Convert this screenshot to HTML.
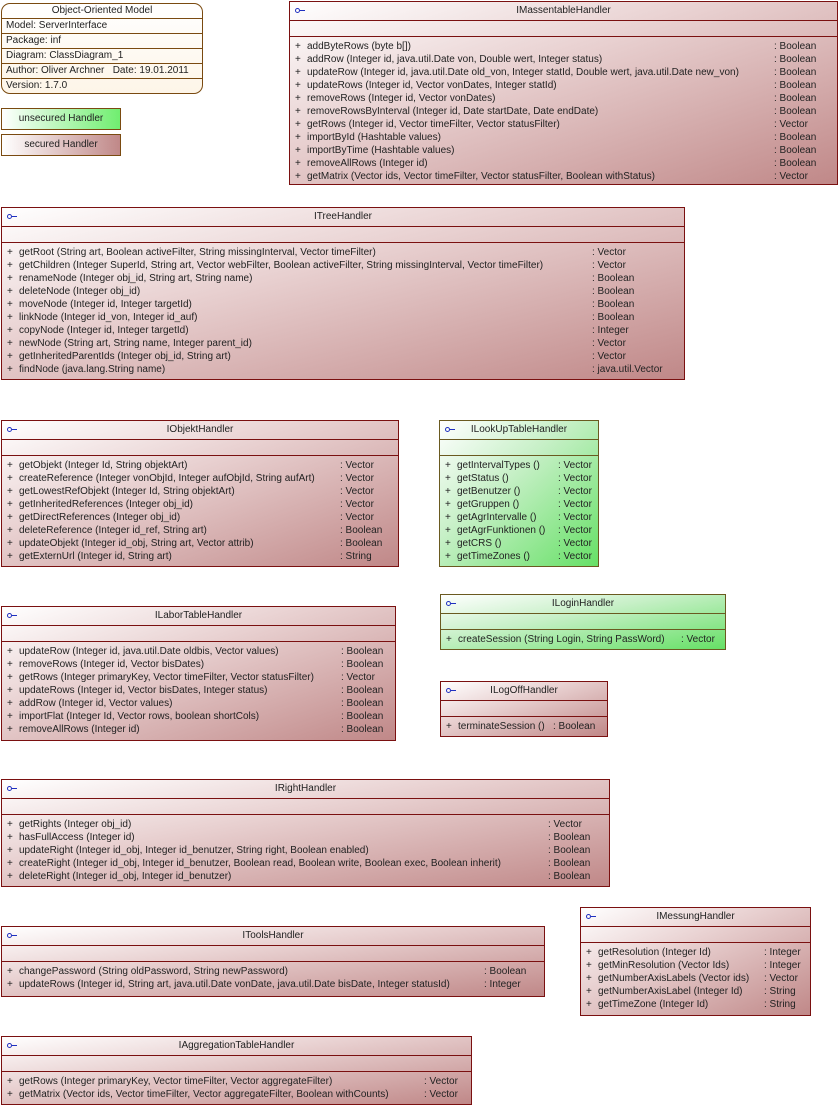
<!DOCTYPE html>
<html><head><meta charset="utf-8"><style>
*{margin:0;padding:0;box-sizing:border-box}
body{width:838px;height:1105px;background:#fff;position:relative;overflow:hidden;font-family:"Liberation Sans",sans-serif;font-size:10px;color:#222}
.b{position:absolute;border:1px solid #7a1010;background:linear-gradient(to bottom right,#fff 0%,#e8d0d0 40%,#c08888 100%)}
.g{border-color:#6a5a20;background:linear-gradient(to bottom right,#fff 0%,#c8f0c8 40%,#66e066 100%)}
.h{height:19px;border-bottom:1px solid #7a1010;text-align:center;line-height:18px;position:relative}
.g .h,.g .e{border-color:#6a5a20}
.h i{position:absolute;left:5px;top:6px;width:5px;height:5px;border:1px solid #2030c0;border-radius:50%}
.h i:after{content:"";position:absolute;left:4px;top:1px;width:5px;height:1px;background:#2030c0}
.e{height:16px;border-bottom:1px solid #7a1010}
.m{padding:3px 0 2px 0;position:relative}
.r{height:13px;line-height:13px;white-space:nowrap;position:relative}
.r b{font-weight:normal;position:absolute;left:5px}
.r s{text-decoration:none;position:absolute;left:17px}
.r u{text-decoration:none;position:absolute}
.info{position:absolute;left:1px;top:3px;width:202px;height:91px;border:1px solid #7a4a10;border-radius:9px;background:linear-gradient(#fff,#fdf5e8);overflow:hidden}
.info div{height:15px;line-height:14px;border-bottom:1px solid #7a4a10;padding-left:4px}
.info div:last-child{border:none}
.leg{position:absolute;left:1px;width:120px;height:22px;border:1px solid #7a4a10;text-align:center;line-height:20px}
</style></head><body>

<div class="info">
<div style="text-align:center;padding:0">Object-Oriented Model</div>
<div>Model: ServerInterface</div>
<div>Package: inf</div>
<div>Diagram: ClassDiagram_1</div>
<div>Author: Oliver Archner&nbsp;&nbsp; Date: 19.01.2011</div>
<div>Version: 1.7.0</div>
</div>
<div class="leg" style="top:108px;background:linear-gradient(to right,#fff,#70ee70)">unsecured Handler</div>
<div class="leg" style="top:134px;background:linear-gradient(to right,#fff,#c08888)">secured Handler</div>

<div class="b" style="left:289px;top:1px;width:549px;height:184px">
<div class="h"><i></i>IMassentableHandler</div><div class="e"></div>
<div class="m">
<div class="r"><b>+</b><s>addByteRows (byte b[])</s><u style="left:484px">: Boolean</u></div>
<div class="r"><b>+</b><s>addRow (Integer id, java.util.Date von, Double wert, Integer status)</s><u style="left:484px">: Boolean</u></div>
<div class="r"><b>+</b><s>updateRow (Integer id, java.util.Date old_von, Integer statId, Double wert, java.util.Date new_von)</s><u style="left:484px">: Boolean</u></div>
<div class="r"><b>+</b><s>updateRows (Integer id, Vector vonDates, Integer statId)</s><u style="left:484px">: Boolean</u></div>
<div class="r"><b>+</b><s>removeRows (Integer id, Vector vonDates)</s><u style="left:484px">: Boolean</u></div>
<div class="r"><b>+</b><s>removeRowsByInterval (Integer id, Date startDate, Date endDate)</s><u style="left:484px">: Boolean</u></div>
<div class="r"><b>+</b><s>getRows (Integer id, Vector timeFilter, Vector statusFilter)</s><u style="left:484px">: Vector</u></div>
<div class="r"><b>+</b><s>importById (Hashtable values)</s><u style="left:484px">: Boolean</u></div>
<div class="r"><b>+</b><s>importByTime (Hashtable values)</s><u style="left:484px">: Boolean</u></div>
<div class="r"><b>+</b><s>removeAllRows (Integer id)</s><u style="left:484px">: Boolean</u></div>
<div class="r"><b>+</b><s>getMatrix (Vector ids, Vector timeFilter, Vector statusFilter, Boolean withStatus)</s><u style="left:484px">: Vector</u></div>
</div></div>

<div class="b" style="left:1px;top:207px;width:684px;height:173px">
<div class="h"><i></i>ITreeHandler</div><div class="e"></div>
<div class="m">
<div class="r"><b>+</b><s>getRoot (String art, Boolean activeFilter, String missingInterval, Vector timeFilter)</s><u style="left:590px">: Vector</u></div>
<div class="r"><b>+</b><s>getChildren (Integer SuperId, String art, Vector webFilter, Boolean activeFilter, String missingInterval, Vector timeFilter)</s><u style="left:590px">: Vector</u></div>
<div class="r"><b>+</b><s>renameNode (Integer obj_id, String art, String name)</s><u style="left:590px">: Boolean</u></div>
<div class="r"><b>+</b><s>deleteNode (Integer obj_id)</s><u style="left:590px">: Boolean</u></div>
<div class="r"><b>+</b><s>moveNode (Integer id, Integer targetId)</s><u style="left:590px">: Boolean</u></div>
<div class="r"><b>+</b><s>linkNode (Integer id_von, Integer id_auf)</s><u style="left:590px">: Boolean</u></div>
<div class="r"><b>+</b><s>copyNode (Integer id, Integer targetId)</s><u style="left:590px">: Integer</u></div>
<div class="r"><b>+</b><s>newNode (String art, String name, Integer parent_id)</s><u style="left:590px">: Vector</u></div>
<div class="r"><b>+</b><s>getInheritedParentIds (Integer obj_id, String art)</s><u style="left:590px">: Vector</u></div>
<div class="r"><b>+</b><s>findNode (java.lang.String name)</s><u style="left:590px">: java.util.Vector</u></div>
</div></div>

<div class="b" style="left:1px;top:420px;width:398px;height:147px">
<div class="h"><i></i>IObjektHandler</div><div class="e"></div>
<div class="m">
<div class="r"><b>+</b><s>getObjekt (Integer Id, String objektArt)</s><u style="left:338px">: Vector</u></div>
<div class="r"><b>+</b><s>createReference (Integer vonObjId, Integer aufObjId, String aufArt)</s><u style="left:338px">: Vector</u></div>
<div class="r"><b>+</b><s>getLowestRefObjekt (Integer Id, String objektArt)</s><u style="left:338px">: Vector</u></div>
<div class="r"><b>+</b><s>getInheritedReferences (Integer obj_id)</s><u style="left:338px">: Vector</u></div>
<div class="r"><b>+</b><s>getDirectReferences (Integer obj_id)</s><u style="left:338px">: Vector</u></div>
<div class="r"><b>+</b><s>deleteReference (Integer id_ref, String art)</s><u style="left:338px">: Boolean</u></div>
<div class="r"><b>+</b><s>updateObjekt (Integer id_obj, String art, Vector attrib)</s><u style="left:338px">: Boolean</u></div>
<div class="r"><b>+</b><s>getExternUrl (Integer id, String art)</s><u style="left:338px">: String</u></div>
</div></div>

<div class="b g" style="left:439px;top:420px;width:160px;height:147px">
<div class="h"><i></i>ILookUpTableHandler</div><div class="e"></div>
<div class="m">
<div class="r"><b>+</b><s>getIntervalTypes ()</s><u style="left:118px">: Vector</u></div>
<div class="r"><b>+</b><s>getStatus ()</s><u style="left:118px">: Vector</u></div>
<div class="r"><b>+</b><s>getBenutzer ()</s><u style="left:118px">: Vector</u></div>
<div class="r"><b>+</b><s>getGruppen ()</s><u style="left:118px">: Vector</u></div>
<div class="r"><b>+</b><s>getAgrIntervalle ()</s><u style="left:118px">: Vector</u></div>
<div class="r"><b>+</b><s>getAgrFunktionen ()</s><u style="left:118px">: Vector</u></div>
<div class="r"><b>+</b><s>getCRS ()</s><u style="left:118px">: Vector</u></div>
<div class="r"><b>+</b><s>getTimeZones ()</s><u style="left:118px">: Vector</u></div>
</div></div>

<div class="b g" style="left:440px;top:594px;width:286px;height:56px">
<div class="h"><i></i>ILoginHandler</div><div class="e"></div>
<div class="m">
<div class="r"><b>+</b><s>createSession (String Login, String PassWord)</s><u style="left:240px">: Vector</u></div>
</div></div>

<div class="b" style="left:440px;top:681px;width:168px;height:56px">
<div class="h"><i></i>ILogOffHandler</div><div class="e"></div>
<div class="m">
<div class="r"><b>+</b><s>terminateSession ()</s><u style="left:112px">: Boolean</u></div>
</div></div>

<div class="b" style="left:1px;top:606px;width:395px;height:135px">
<div class="h"><i></i>ILaborTableHandler</div><div class="e"></div>
<div class="m">
<div class="r"><b>+</b><s>updateRow (Integer id, java.util.Date oldbis, Vector values)</s><u style="left:339px">: Boolean</u></div>
<div class="r"><b>+</b><s>removeRows (Integer id, Vector bisDates)</s><u style="left:339px">: Boolean</u></div>
<div class="r"><b>+</b><s>getRows (Integer primaryKey, Vector timeFilter, Vector statusFilter)</s><u style="left:339px">: Vector</u></div>
<div class="r"><b>+</b><s>updateRows (Integer id, Vector bisDates, Integer status)</s><u style="left:339px">: Boolean</u></div>
<div class="r"><b>+</b><s>addRow (Integer id, Vector values)</s><u style="left:339px">: Boolean</u></div>
<div class="r"><b>+</b><s>importFlat (Integer Id, Vector rows, boolean shortCols)</s><u style="left:339px">: Boolean</u></div>
<div class="r"><b>+</b><s>removeAllRows (Integer id)</s><u style="left:339px">: Boolean</u></div>
</div></div>

<div class="b" style="left:1px;top:779px;width:609px;height:108px">
<div class="h"><i></i>IRightHandler</div><div class="e"></div>
<div class="m">
<div class="r"><b>+</b><s>getRights (Integer obj_id)</s><u style="left:546px">: Vector</u></div>
<div class="r"><b>+</b><s>hasFullAccess (Integer id)</s><u style="left:546px">: Boolean</u></div>
<div class="r"><b>+</b><s>updateRight (Integer id_obj, Integer id_benutzer, String right, Boolean enabled)</s><u style="left:546px">: Boolean</u></div>
<div class="r"><b>+</b><s>createRight (Integer id_obj, Integer id_benutzer, Boolean read, Boolean write, Boolean exec, Boolean inherit)</s><u style="left:546px">: Boolean</u></div>
<div class="r"><b>+</b><s>deleteRight (Integer id_obj, Integer id_benutzer)</s><u style="left:546px">: Boolean</u></div>
</div></div>

<div class="b" style="left:1px;top:926px;width:544px;height:71px">
<div class="h"><i></i>IToolsHandler</div><div class="e"></div>
<div class="m">
<div class="r"><b>+</b><s>changePassword (String oldPassword, String newPassword)</s><u style="left:482px">: Boolean</u></div>
<div class="r"><b>+</b><s>updateRows (Integer id, String art, java.util.Date vonDate, java.util.Date bisDate, Integer statusId)</s><u style="left:482px">: Integer</u></div>
</div></div>

<div class="b" style="left:580px;top:907px;width:231px;height:109px">
<div class="h"><i></i>IMessungHandler</div><div class="e"></div>
<div class="m">
<div class="r"><b>+</b><s>getResolution (Integer Id)</s><u style="left:183px">: Integer</u></div>
<div class="r"><b>+</b><s>getMinResolution (Vector Ids)</s><u style="left:183px">: Integer</u></div>
<div class="r"><b>+</b><s>getNumberAxisLabels (Vector ids)</s><u style="left:183px">: Vector</u></div>
<div class="r"><b>+</b><s>getNumberAxisLabel (Integer Id)</s><u style="left:183px">: String</u></div>
<div class="r"><b>+</b><s>getTimeZone (Integer Id)</s><u style="left:183px">: String</u></div>
</div></div>

<div class="b" style="left:1px;top:1036px;width:471px;height:69px">
<div class="h"><i></i>IAggregationTableHandler</div><div class="e"></div>
<div class="m">
<div class="r"><b>+</b><s>getRows (Integer primaryKey, Vector timeFilter, Vector aggregateFilter)</s><u style="left:422px">: Vector</u></div>
<div class="r"><b>+</b><s>getMatrix (Vector ids, Vector timeFilter, Vector aggregateFilter, Boolean withCounts)</s><u style="left:422px">: Vector</u></div>
</div></div>

</body></html>
